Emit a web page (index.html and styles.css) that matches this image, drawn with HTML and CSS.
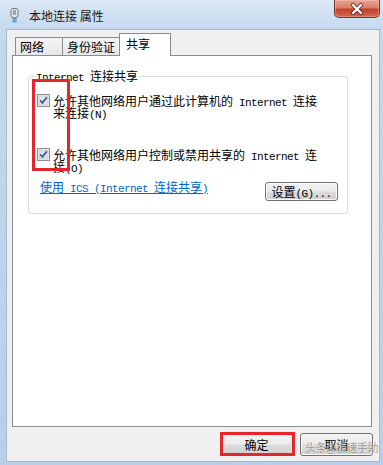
FILE: index.html
```html
<!DOCTYPE html>
<html lang="zh-CN">
<head>
  <meta charset="UTF-8">
  <title>本地连接 属性</title>
  <link rel="stylesheet" href="styles.css">
</head>
<body>

  <div class="window">

    <!-- 标题栏 -->
    <div class="titlebar">
      <svg class="app-icon" width="9" height="15" viewBox="0 0 9 15">
        <rect x="1" y="0.5" width="7" height="9" rx="2" fill="#dfe5ea" stroke="#6f7b86"/>
        <rect x="3" y="2" width="3" height="5" fill="#9aa6b1"/>
        <rect x="2.5" y="9.5" width="4" height="2" fill="#8796a4"/>
        <path d="M3 11.5 V14.5 M4.5 11.5 V14.5 M6 11.5 V14.5" stroke="#3b8ad6" stroke-width="1"/>
      </svg>
      <span class="title">本地连接 属性</span>
      <div class="close">
        <svg width="46" height="18" viewBox="0 0 46 18">
          <path d="M19 5 L27 13 M27 5 L19 13" stroke="#4a2520" stroke-width="4.2" stroke-linecap="round" opacity="0.7"/>
          <path d="M19 5 L27 13 M27 5 L19 13" stroke="#ffffff" stroke-width="2.2" stroke-linecap="round"/>
        </svg>
      </div>
    </div>

    <div class="client">

      <!-- 选项卡 -->
      <div class="tabs">
        <div class="tab">网络</div>
        <div class="tab">身份验证</div>
        <div class="tab active">共享</div>
      </div>

      <div class="panel">
        <fieldset class="group">
          <legend><span class="en">Internet </span>连接共享</legend>

          <label class="check first">
            <svg class="box" width="13" height="13" viewBox="0 0 13 13">
              <rect x="0.5" y="0.5" width="12" height="12" fill="#f4f4f4" stroke="#8e8f8f"/>
              <rect x="2" y="2" width="9" height="9" fill="#dfe3ea" stroke="#b7bcc4" stroke-width="0.6"/>
              <path d="M3.2 6.4 L5.4 8.8 L9.8 3.4" fill="none" stroke="#435c94" stroke-width="1.8"/>
            </svg>
            <span class="label">允许其他网络用户通过此计算机的<span class="en"> Internet </span>连接<br>来连接<span class="en">(N)</span></span>
          </label>

          <label class="check second">
            <svg class="box" width="13" height="13" viewBox="0 0 13 13">
              <rect x="0.5" y="0.5" width="12" height="12" fill="#f4f4f4" stroke="#8e8f8f"/>
              <rect x="2" y="2" width="9" height="9" fill="#dfe3ea" stroke="#b7bcc4" stroke-width="0.6"/>
              <path d="M3.2 6.4 L5.4 8.8 L9.8 3.4" fill="none" stroke="#435c94" stroke-width="1.8"/>
            </svg>
            <span class="label">允许其他网络用户控制或禁用共享的<span class="en"> Internet </span>连<br>接<span class="en">(O)</span></span>
          </label>

          <div class="ics-row">
            <a class="link" href="#">使用<span class="en"> ICS (Internet </span>连接共享<span class="en">)</span></a>
            <button class="btn small">设置<span class="en">(G)...</span></button>
          </div>
        </fieldset>
      </div>

      <!-- 底部按钮 -->
      <div class="footer">
        <button class="btn default">确定</button>
        <button class="btn">取消</button>
      </div>

    </div>

    <!-- 红框标注 -->
    <div class="mark mark-check"></div>
    <div class="mark mark-ok"></div>
    <div class="watermark">头条@极速手助</div>

  </div>

</body>
</html>
```

FILE: styles.css
```css
body {
  margin: 0;
  font-family: "Noto Sans CJK SC", sans-serif;
  font-size: 12px;
  color: #000;
}

.window {
  position: relative;
  width: 383px;
  height: 465px;
  box-sizing: border-box;
  padding: 0 3px 3px 6px;
  background: linear-gradient(#dce8f5, #c4d8ee 30px, #b9cfe9);
  display: flex;
  flex-direction: column;
}

.en {
  font-family: "Liberation Mono", monospace;
  font-size: 11px;
  line-height: 0;
  letter-spacing: -0.6px;
}

/* 标题栏 */
.titlebar {
  height: 29px;
  flex-shrink: 0;
  display: flex;
  align-items: center;
}

.app-icon {
  margin-left: 4px;
  margin-top: 1px;
}

.title {
  margin-left: 10px;
  margin-top: 1px;
  font-size: 12px;
  color: #1a1a1a;
}

.close {
  align-self: flex-start;
  margin-left: auto;
  width: 46px;
  height: 18px;
  box-sizing: border-box;
  border: 1px solid #7a3328;
  border-top: none;
  border-radius: 0 0 5px 5px;
  background: linear-gradient(#e6a593 0%, #d9806c 45%, #c4402c 55%, #d06a52 100%);
  box-shadow: inset 0 0 0 1px rgba(255, 210, 200, 0.35);
}

.close svg {
  display: block;
  margin-left: -1px;
}

/* 客户区 */
.client {
  flex: 1;
  background: #f0f0f0;
  border: 1px solid #a8b8ca;
  padding-left: 5px;
  display: flex;
  flex-direction: column;
}

.tabs {
  display: flex;
  align-items: flex-end;
  height: 22px;
  margin-top: 3px;
  padding-left: 3px;
}

.tab {
  height: 18px;
  min-width: 48px;
  box-sizing: border-box;
  padding: 0 4px;
  border: 1px solid #898c95;
  border-bottom: none;
  background: linear-gradient(#f5f5f5, #e7e7e7);
  line-height: 17px;
  margin-left: -1px;
}

.tab:first-child {
  margin-left: 0;
}

.tab.active {
  position: relative;
  z-index: 1;
  height: 23px;
  min-width: 52px;
  padding: 1px 6px 0;
  margin-bottom: -1px;
  background: #fff;
  line-height: 17px;
}

.panel {
  height: 372px;
  box-sizing: border-box;
  margin-right: 7px;
  background: #fff;
  border: 1px solid #898c95;
}

.group {
  width: 320px;
  box-sizing: border-box;
  margin: 14px 0 0 15px;
  padding: 0 9px 12px 8px;
  border: 1px solid #d5dfe5;
  border-radius: 3px;
}

.group legend {
  padding: 0 1px;
  margin-left: -2px;
  line-height: 12px;
}

.check {
  display: flex;
  align-items: flex-start;
  gap: 3px;
  line-height: 12px;
}

.check.first {
  margin-top: 12px;
}

.check.second {
  margin-top: 29px;
}

.label {
  margin-top: 1px;
}

.box {
  flex-shrink: 0;
}

.ics-row {
  display: flex;
  justify-content: space-between;
  align-items: flex-start;
  margin-top: 8px;
}

.link {
  margin-left: 3px;
  color: #0066cc;
  text-decoration: underline;
  line-height: 12px;
}

/* 按钮 */
.btn {
  width: 73px;
  height: 23px;
  padding: 0;
  font-family: "Noto Sans CJK SC", sans-serif;
  font-size: 12px;
  color: #000;
  border: 1px solid #707070;
  border-radius: 3px;
  background: linear-gradient(#f2f2f2 0%, #ebebeb 48%, #dddddd 52%, #cfcfcf 100%);
  box-shadow: inset 0 0 0 1px #fbfbfb;
}

.btn.small {
  height: 19px;
  margin-top: 1px;
  line-height: 15px;
}

.btn.default {
  border-color: #3c7fb1;
  box-shadow: inset 0 0 0 1px #bfe3f7;
}

.footer {
  display: flex;
  justify-content: flex-end;
  gap: 7px;
  margin-top: 6px;
  padding-right: 6px;
}

/* 标注 */
.mark {
  position: absolute;
  box-sizing: border-box;
  border: 3px solid #e5262c;
}

.mark-check {
  left: 32px;
  top: 79px;
  width: 38px;
  height: 92px;
}

.mark-ok {
  left: 220px;
  top: 432px;
  width: 75px;
  height: 24px;
}

.watermark {
  position: absolute;
  left: 305px;
  top: 441px;
  font-size: 11px;
  line-height: 13px;
  color: rgba(70, 70, 70, 0.55);
  text-shadow: 0 0 1px #fff;
  letter-spacing: -0.5px;
}
```
